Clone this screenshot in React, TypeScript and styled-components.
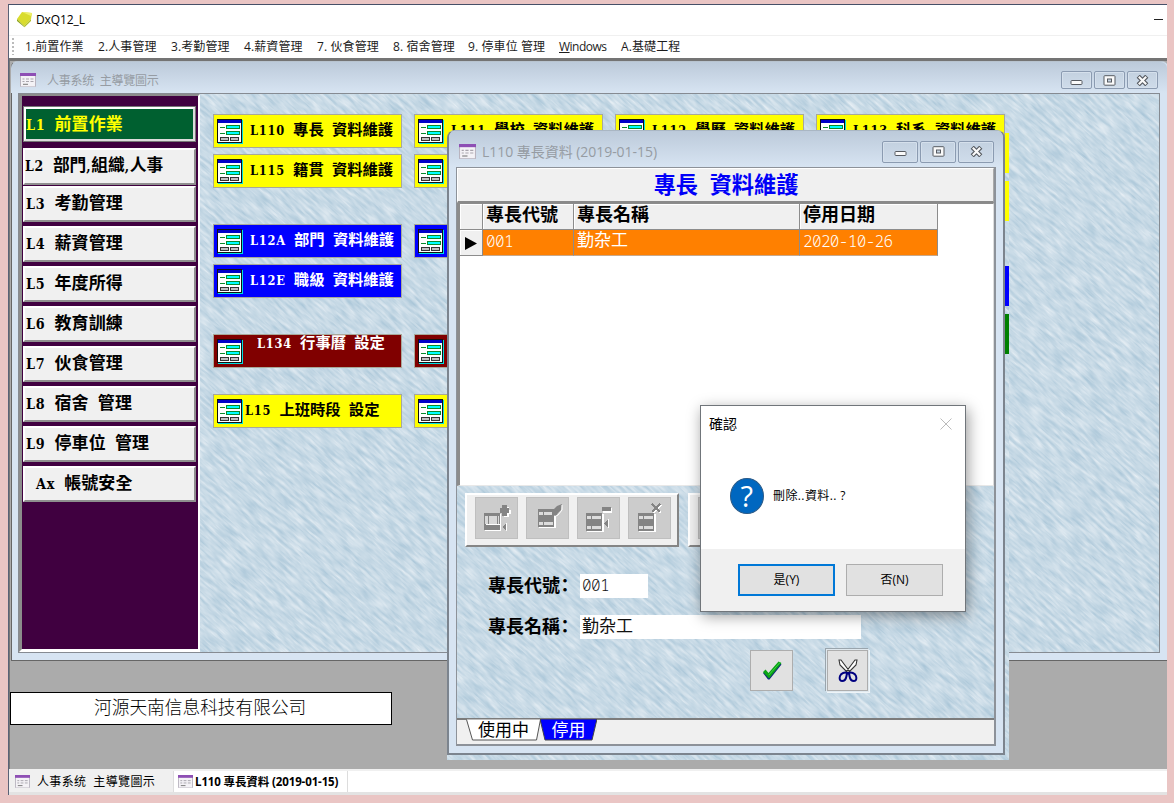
import React from "react";
import styled, { createGlobalStyle } from "styled-components";

const UI = `"Open Sans", "Noto Sans", "Noto Sans CJK TC", sans-serif`;
const CJK = `"Noto Sans CJK TC", "Noto Sans CJK SC", sans-serif`;

const GlobalStyle = createGlobalStyle`
  * { box-sizing: border-box; }
  body { margin: 0; background: #eac5c4; overflow: hidden; }
  button { font: inherit; color: inherit; margin: 0; padding: 0; border-radius: 0; }
`;

/* ---------- text with half-width serif Latin beside full-width CJK ---------- */

const MingBox = styled.span<{ $size: number; $gap: number; $bold: boolean }>`
  font-family: ${CJK};
  font-size: ${(p) => p.$size}px;
  letter-spacing: ${(p) => p.$gap}px;
  font-weight: ${(p) => (p.$bold ? 700 : 400)};
  white-space: pre;
  line-height: 1;
`;

const Latin = styled.span<{ $half: number }>`
  font-family: "DejaVu Serif Condensed", "DejaVu Serif", serif;
  font-size: ${(p) => p.$half * 1.66}px;
  letter-spacing: 0.75px;
  word-spacing: ${(p) => p.$half * 0.46}px;
`;

interface MingProps {
  text: string;
  size?: number;
  gap?: number;
  bold?: boolean;
}

const Ming = ({ text, size = 15.3, gap = 0, bold = true }: MingProps) => (
  <MingBox $size={size} $gap={gap} $bold={bold}>
    {text.split(/([\x20-\x7e]+)/).map((run, i) =>
      i % 2 ? (
        <Latin key={i} $half={(size + gap) / 2}>
          {run}
        </Latin>
      ) : (
        run
      ),
    )}
  </MingBox>
);

/* ---------- brushed paper background ---------- */

const TextureSvg = styled.svg`
  position: absolute;
  inset: 0;
  width: 100%;
  height: 100%;
  z-index: -1;
`;

const Texture = ({ id }: { id: string }) => (
  <TextureSvg aria-hidden="true">
    <filter id={id} x="0" y="0" width="100%" height="100%" colorInterpolationFilters="sRGB">
      <feTurbulence type="fractalNoise" baseFrequency="0.05 0.34" numOctaves={3} seed={4} />
      <feColorMatrix values="0.3 0 0 0 0.63  0.2 0 0 0 0.752  0.14 0 0 0 0.83  0 0 0 0 1" />
    </filter>
    <rect width="100%" height="100%" fill="#c9dce8" />
    <g transform="rotate(42)">
      <rect x="-200" y="-900" width="1800" height="1800" filter={`url(#${id})`} />
    </g>
  </TextureSvg>
);

/* ---------- icons ---------- */

const FormIcon = () => (
  <svg width="27" height="25" viewBox="0 0 27 25" shapeRendering="crispEdges">
    <rect x="1" y="1" width="25" height="24" fill="#00e0e0" />
    <rect width="25" height="24" fill="#111" />
    <rect x="1" y="4" width="23" height="19" fill="#fff" />
    <rect x="1" y="1" width="23" height="3" fill="#0000c8" />
    <path d="M3 8.5h5M3 14.5h5" stroke="#0a8a2a" />
    <rect x="9.5" y="6.5" width="13" height="3" fill="#00ffff" stroke="#0a8a2a" />
    <rect x="9.5" y="12.5" width="13" height="3" fill="#00ffff" stroke="#0a8a2a" />
    <rect x="3.5" y="18.5" width="8" height="3" fill="#c0c0c0" stroke="#333" />
    <rect x="13.5" y="18.5" width="8" height="3" fill="#c0c0c0" stroke="#333" />
  </svg>
);

const WindowIcon = ({ w = 16 }: { w?: number }) => (
  <svg width={w} height={w * 0.9} viewBox="0 0 16 14.4">
    <rect x="0.5" y="0.5" width="15" height="13.4" rx="0.6" fill="#f4f2f6" stroke="#b9b4bf" />
    <rect width="16" height="3" fill="#8e4fb4" />
    <path d="M2.5 6h2M2.5 8.5h2M6 6h3M6 8.5h3M10.5 6h3M10.5 8.5h3" stroke="#a9a5ad" />
    <path d="M3 11.3h5" stroke="#777" />
  </svg>
);

const AppIcon = () => (
  <svg width="17" height="17" viewBox="0 0 17 17">
    <path d="M1 8 6 1l10 1-1 6-7 7z" fill="#d9dc2e" />
    <path d="M1 8l7 7 0.5 1.2L1 10z" fill="#8fa51c" />
    <path d="M8 15l7-7v2l-6.5 6.2z" fill="#b2bf25" />
    <path d="M6 1l10 1-1 3z" fill="#eef06a" />
  </svg>
);

const MinGlyph = () => (
  <svg width="13" height="11" viewBox="0 0 13 11">
    <rect x="1" y="5.5" width="11" height="4" rx="0.8" fill="#fafafa" stroke="#565a60" />
  </svg>
);

const MaxGlyph = () => (
  <svg width="13" height="11" viewBox="0 0 13 11">
    <rect x="1" y="0.7" width="11" height="9.5" rx="0.8" fill="#fafafa" stroke="#565a60" />
    <rect x="4.5" y="4" width="4" height="3" fill="#c7d5e3" stroke="#565a60" />
  </svg>
);

const CloseGlyph = () => (
  <svg width="13" height="11" viewBox="0 0 13 11">
    <path d="M2.2 1.2l8.6 8.6M10.8 1.2l-8.6 8.6" stroke="#565a60" strokeWidth="4.4" />
    <path d="M2.8 1.8l7.4 7.4M10.2 1.8l-7.4 7.4" stroke="#fafafa" strokeWidth="2.2" />
  </svg>
);

type ToolKind = "add" | "edit" | "remove" | "cancel";

const Table = ({ y, h }: { y: number; h: number }) => (
  <>
    <rect x="10" y={y + 1} width="17" height={h} fill="#fff" />
    <rect x="9" y={y} width="16" height={h} fill="#848484" />
    <path d={`M10 ${y + 4.5}h14M10 ${y + h - 3.5}h14`} stroke="#dcdcdc" strokeWidth="3" />
    <path d={`M14.5 ${y + 3}v3M14.5 ${y + h - 5}v3`} stroke="#848484" />
  </>
);

const ToolIcon = ({ kind }: { kind: ToolKind }) => (
  <svg width="43" height="41" viewBox="0 0 43 41" shapeRendering={kind === "edit" ? "auto" : "crispEdges"}>
    {kind === "add" && (
      <>
        <rect x="10" y="16" width="16" height="17" fill="#fff" />
        <rect x="9" y="15" width="16" height="17" fill="#848484" />
        <path d="M10 18h14v8H10z" fill="#d8d8d8" />
        <path d="M13.5 18v8M22.5 18v8" stroke="#848484" />
        <path d="M11 26.5h14" stroke="#fff" />
        <path d="M29 9h5v3h2v4h-2v3h-5v-3h-2v-4h2z" fill="#fff" />
        <path d="M27 7h5v3h2v5h-2v3h-5v-3h-2v-5h2z" fill="#848484" />
        <path d="M31 25v8l-4-4z" fill="#848484" />
        <path d="M31.5 25v8" stroke="#fff" />
      </>
    )}
    {kind === "edit" && (
      <>
        <g transform="translate(3 -4)">
          <Table y={15} h={18} />
        </g>
        <path d="M26 13l5-5 5-2-1 6-3 3-2 3-4-1z" fill="#848484" />
        <path d="M28 19l4-2 4-5V7" stroke="#fff" fill="none" />
      </>
    )}
    {kind === "remove" && (
      <>
        <Table y={15} h={18} />
        <rect x="26" y="10" width="9" height="5" fill="#fff" />
        <rect x="25" y="9" width="9" height="4" fill="#848484" />
        <path d="M31 21v9l-4-4z" fill="#848484" />
        <path d="M31.5 21v9" stroke="#fff" />
      </>
    )}
    {kind === "cancel" && (
      <>
        <g transform="translate(1 0)">
          <Table y={15} h={18} />
        </g>
        <path d="M25 7l8 8M33 7l-8 8" stroke="#fff" strokeWidth="1.5" />
        <path d="M24 6l8 8M32 6l-8 8" stroke="#848484" strokeWidth="1.5" />
      </>
    )}
  </svg>
);

const CheckIcon = () => (
  <svg width="20" height="20" viewBox="0 0 20 20">
    <path d="M1 12l2.5-2.5 3 4L17.5 2l2 1.500L7.500 18.500H6z" fill="#102a7a" />
    <path d="M1 11l2.5-2.5L6.500 12 16.500 0.500 19.500 2 7 17.500z" fill="#0aa514" />
    <path d="M6.800 14L18 1.500" stroke="#3fd24a" />
  </svg>
);

const ScissorsIcon = () => (
  <svg width="22" height="23" viewBox="0 0 22 23" fill="none">
    <path d="M2 1l1 5 8 8 2-1-9-12zM20 1l-1 5-8 8-2-1L18 1z" fill="#fff" stroke="#333" strokeWidth="1.1" />
    <path d="M8 13h6l-3 3z" fill="#000080" />
    <path d="M10 14c-2-1-6 0-7 3-1 3 0 5 2 5s4-2 4.5-5zM12 14c2-1 6 0 7 3 1 3 0 5-2 5s-4-2-4.5-5z" stroke="#000080" strokeWidth="2" />
  </svg>
);

/* ---------- shell ---------- */

const Shell = styled.div`
  width: 1159px;
  height: 791px;
  margin: 4px 0 0 8px;
  display: flex;
  flex-direction: column;
  border-left: 1px solid #5a6276;
  border-top: 1px solid #465068;
  background: #fff;
`;

const TitleBar = styled.header`
  height: 31px;
  flex: none;
  display: flex;
  align-items: center;
  padding: 0 4px 1px 7px;
  gap: 3px;
  font: 12px/16px ${UI};
  letter-spacing: -0.1px;
  border-bottom: 1px solid #f0f0f0;
`;

const Minimise = styled.i`
  width: 9px;
  height: 1px;
  margin-left: auto;
  background: #222;
`;

const MenuBar = styled.nav`
  height: 22px;
  flex: none;
  display: flex;
  align-items: center;
  padding: 0 0 1px 3px;
  font: 12px/16px ${UI};
  color: #1c1c1c;
`;

const Grip = styled.i`
  height: 17px;
  width: 2px;
  margin-right: 11px;
  background: repeating-linear-gradient(#bbb 0 2px, transparent 2px 4px);
`;

const MenuItem = styled.span<{ $w: number; $ls?: number }>`
  width: ${(p) => p.$w}px;
  white-space: nowrap;
  letter-spacing: ${(p) => p.$ls ?? 0.1}px;
`;

const Desktop = styled.main`
  position: relative;
  flex: 1;
  background: #ababab;
  border-top: 3px solid #747474;
  box-shadow: inset 1px 0 #777;
  overflow: hidden;
`;

const MdiFrame = styled.section`
  position: absolute;
  display: flex;
  flex-direction: column;
  border: 1px solid #666;
  background: #d7e4f2;
`;

const MainFrame = styled(MdiFrame)`
  left: 2px;
  top: 0;
  width: 1157px;
  height: 600px;
  border-right: 0;
  border-top-color: #b8c4d0;
  border-radius: 6px 6px 0 0;
  padding: 0 8px 7px 6px;
`;

const FrameTitle = styled.header<{ $h: number; $size: number; $pad: number; $end: number }>`
  height: ${(p) => p.$h}px;
  flex: none;
  display: flex;
  align-items: center;
  margin: 0 -7px 0 -7px;
  padding: 5px ${(p) => p.$end}px 0 ${(p) => p.$pad}px;
  background: linear-gradient(#bccada, #d7e4f2);
  border-radius: 6px 6px 0 0;
  font: ${(p) => p.$size}px/18px ${UI};
  color: #969ca3;
  white-space: pre;
`;

const FrameText = styled.span<{ $gap: number; $ls?: number }>`
  margin: 1px auto 0 ${(p) => p.$gap}px;
  letter-spacing: ${(p) => p.$ls ?? 0}px;
`;

const FrameButton = styled.button<{ $w: number; $h: number }>`
  width: ${(p) => p.$w}px;
  height: ${(p) => p.$h}px;
  margin-left: 2px;
  display: grid;
  place-items: center;
  background: linear-gradient(#c3d1e0, #cfdcea);
  border: 1px solid #8b9bb1;
  border-radius: 2px;
  box-shadow: inset 0 0 0 1px #d5e0ec;
`;

const FrameButtons = ({ w, h }: { w: number; h: number }) => (
  <>
    <FrameButton $w={w} $h={h}><MinGlyph /></FrameButton>
    <FrameButton $w={w} $h={h}><MaxGlyph /></FrameButton>
    <FrameButton $w={w} $h={h}><CloseGlyph /></FrameButton>
  </>
);

const MainBody = styled.div`
  position: relative;
  isolation: isolate;
  flex: 1;
  display: flex;
  border: 1px solid #868b92;
  overflow: hidden;
`;

/* ---------- sidebar ---------- */

const Sidebar = styled.nav`
  width: 181px;
  flex: none;
  display: flex;
  flex-direction: column;
  padding: 10px 3px 0 1px;
  background: #400040;
  border: solid;
  border-width: 2px 2px 3px 3px;
  border-color: #8c8c8c #fff #fff #8c8c8c;
`;

const SideButton = styled.button<{ $h: number; $mt: number; $pad: number; $active?: boolean }>`
  width: 173px;
  height: ${(p) => p.$h}px;
  margin-top: ${(p) => p.$mt}px;
  padding: 0 0 ${(p) => (p.$active ? 1 : 4)}px ${(p) => p.$pad}px;
  display: flex;
  align-items: center;
  color: ${(p) => (p.$active ? "#ff0" : "#000")};
  background: ${(p) => (p.$active ? "#006030" : "#f0f0f0")};
  border: solid;
  border-width: ${(p) => (p.$active ? "3px" : "2px")};
  border-color: ${(p) => (p.$active ? "#fff #ddd #ddd #fff" : "#fff #8f8f8f #8f8f8f #fff")};
  outline: ${(p) => (p.$active ? "1px solid #777" : "none")};
  outline-offset: -1px;
`;

interface SideItem {
  text: string;
  mt: number;
  pad?: number;
  size?: number;
}

const sideItems: SideItem[] = [
  { text: "L1 前置作業", mt: 0, pad: 0 },
  { text: "L2 部門,組織,人事", mt: 6, size: 16.7, pad: 0 },
  { text: "L3 考勤管理", mt: 1 },
  { text: "L4 薪資管理", mt: 4 },
  { text: "L5 年度所得", mt: 4 },
  { text: "L6 教育訓練", mt: 4 },
  { text: "L7 伙食管理", mt: 4 },
  { text: "L8 宿舍 管理", mt: 4 },
  { text: "L9 停車位 管理", mt: 4 },
  { text: "Ax 帳號安全", mt: 4, pad: 11 },
];

/* ---------- navigation map ---------- */

const NavMap = styled.div`
  display: flex;
  flex-direction: column;
  padding: 20px 0 0 13px;
`;

const NavRow = styled.div<{ $mt: number }>`
  display: flex;
  gap: 12px;
  margin-top: ${(p) => p.$mt}px;
`;

const tones = { yellow: ["#ffff00", "#000"], blue: ["#0000ff", "#fff"], maroon: ["#800000", "#fff"] };
type Tone = keyof typeof tones;

const NavButton = styled.button<{ $tone: Tone; $pad: number; $up?: boolean }>`
  width: 189px;
  height: 34px;
  display: flex;
  align-items: center;
  padding-left: 3px;
  color: ${(p) => tones[p.$tone][1]};
  background: ${(p) => tones[p.$tone][0]};
  border: 1px solid #a8a89a;

  svg { flex: none; }
  > span { flex: none; margin: 0 0 ${(p) => (p.$up ? 17 : 3)}px ${(p) => p.$pad}px; }
`;

interface NavItem {
  text: string;
  pad?: number;
  up?: boolean;
}

const navRows: { tone: Tone; mt: number; items: NavItem[] }[] = [
  {
    tone: "yellow",
    mt: 0,
    items: [
      { text: "L110 專長 資料維護" },
      { text: "L111 學校 資料維護" },
      { text: "L112 學歷 資料維護" },
      { text: "L113 科系 資料維護" },
    ],
  },
  { tone: "yellow", mt: 6, items: [{ text: "L115 籍貫 資料維護" }, { text: "" }] },
  { tone: "blue", mt: 36, items: [{ text: "L12A 部門 資料維護" }, { text: "" }] },
  { tone: "blue", mt: 6, items: [{ text: "L12E 職級 資料維護" }] },
  { tone: "maroon", mt: 36, items: [{ text: "L134 行事曆 設定", pad: 13, up: true }, { text: "" }] },
  { tone: "yellow", mt: 26, items: [{ text: "L15 上班時段 設定", pad: 1 }, { text: "" }] },
];

/* ---------- record window ---------- */

const RecordPatch = styled.div`
  position: absolute;
  isolation: isolate;
  left: 438px;
  top: 69px;
  width: 562px;
  height: 630px;

  > svg { top: 10px; height: 620px; }
`;

const EdgeStrips = styled.div`
  position: absolute;
  right: 0;
  top: 3px;
  width: 4px;
  display: flex;
  flex-direction: column;
`;

const EdgeStrip = styled.i<{ $c: string; $mt: number }>`
  height: 40px;
  margin-top: ${(p) => p.$mt}px;
  background: ${(p) => p.$c};
`;

const RecordFrame = styled(MdiFrame)`
  inset: 0 4px 5px 0;
  border-radius: 8px 8px 0 0;
  border-width: 1px 2px 2px;
  border-color: #a9b6c3 #7c848e #7c848e;
  padding: 0 7px 7px 7px;
`;

const RecordBody = styled.div`
  flex: 1;
  display: flex;
  flex-direction: column;
  border: 2px solid #8d9299;
  border-width: 1px 2px 2px 1px;
`;

const Heading = styled.h1`
  height: 35px;
  flex: none;
  margin: 0;
  display: flex;
  align-items: center;
  justify-content: center;
  padding: 0 0 1px 1px;
  background: #f0f0f0;
  border: solid;
  border-width: 1px 1px 2px 1px;
  border-color: #fff #aaa #8a8a8a #fff;
  color: #0000f8;
`;

const Grid = styled.div`
  height: 283px;
  flex: none;
  background: #fff;
  border: solid;
  border-width: 1px 1px 1px 3px;
  border-color: #8c8c8c #ddd #e8e8e8 #8c8c8c;
`;

const GridRow = styled.div<{ $head?: boolean }>`
  display: grid;
  grid-template-columns: 23px 91px 226px 138px;
  width: 478px;
  height: 26px;
  color: ${(p) => (p.$head ? "#000" : "#fff")};
  background: ${(p) => (p.$head ? "#f0f0f0" : "#ff8000")};
  font: 17px/1 ${CJK};
`;

const Cell = styled.div<{ $plain?: boolean }>`
  padding: 0 0 0 3px;
  background: ${(p) => (p.$plain ? "#f0f0f0" : "transparent")};
  border-right: 1px solid #8c8c8c;
  border-bottom: 1px solid ${(p) => (p.$plain ? "#8c8c8c" : "#c9a88a")};
  box-shadow: inset 1px 1px ${(p) => (p.$plain ? "#fff" : "transparent")};
`;

const Digits = styled.span`
  font: 300 16px/22px "Noto Sans Mono", monospace;
  letter-spacing: -0.65px;
`;

const Form = styled.div`
  position: relative;
  isolation: isolate;
  flex: 1;
  display: flex;
  flex-direction: column;
  padding-left: 8px;
  overflow: hidden;
`;

const Toolbars = styled.div`
  display: flex;
  gap: 9px;
  margin-top: 7px;
`;

const Toolbar = styled.div`
  flex: none;
  height: 54px;
  display: flex;
  gap: 8px;
  padding: 3px 6px 0 8px;
  background: #f0f0f0;
  border: 2px solid;
  border-color: #fff #858585 #858585 #fff;
`;

const ToolButton = styled.button`
  width: 43px;
  height: 42px;
  margin-top: -1px;
  display: grid;
  place-items: center;
  background: #ccc;
  border: 1px solid #bfbfbf;

  svg { flex: none; margin: -1px; }
`;

const Field = styled.label<{ $mt: number }>`
  display: flex;
  align-items: center;
  height: 24px;
  margin-top: ${(p) => p.$mt}px;
  padding-left: 23px;
`;

const FieldName = styled.span`
  width: 92px;
  padding-bottom: 2px;
`;

const Colon = styled.span`
  margin-left: -4px;
`;

const FieldValue = styled.span<{ $w: number }>`
  width: ${(p) => p.$w}px;
  height: 24px;
  padding-left: 2px;
  background: #fff;
  color: #111;
  font: 17px/20px ${CJK};
`;

const Actions = styled.div`
  display: flex;
  gap: 34px;
  margin: 11px 0 0 285px;
`;

const ActionButton = styled.button<{ $inset?: boolean }>`
  width: ${(p) => (p.$inset ? 41 : 43)}px;
  height: 41px;
  display: grid;
  place-items: center;
  background: #e1e1e1;
  border: 1px solid #adadad;
  outline: ${(p) => (p.$inset ? "1px solid #dfe8ee" : "none")};
  box-shadow: ${(p) => (p.$inset ? "-1px -1px 0 1px #9aa5ad, 1px 1px 0 1px #eef4f8" : "none")};
`;

const TabStrip = styled.div`
  height: 26px;
  flex: none;
  background: #f0f0f0;
  border-top: 2px solid #7c7c7c;
  padding-left: 9px;
  display: flex;
`;

const Tab = styled.div<{ $active?: boolean; $w: number }>`
  position: relative;
  isolation: isolate;
  width: ${(p) => p.$w}px;
  height: 21px;
  margin: -1px -1px 0 0;
  text-align: center;
  font: 17px/20px ${CJK};
  color: ${(p) => (p.$active ? "#fff" : "#000")};

  svg { position: absolute; inset: 0; z-index: -1; }
`;

/* ---------- confirmation dialog ---------- */

const Dialog = styled.div`
  position: absolute;
  left: 691px;
  top: 344px;
  width: 266px;
  height: 207px;
  display: flex;
  flex-direction: column;
  background: #fff;
  border: 1px solid #70757a;
  box-shadow: 2px 4px 14px rgba(0, 0, 0, 0.4);
  font: 12px/16px ${UI};
`;

const DialogTitle = styled.header`
  display: flex;
  justify-content: space-between;
  align-items: center;
  height: 36px;
  padding: 0 13px 0 8px;
  font-size: 14px;
`;

const DialogMessage = styled.div`
  flex: 1;
  display: flex;
  gap: 9px;
  align-items: center;
  padding: 0 0 0 29px;
  letter-spacing: 0.4px;
`;

const Question = styled.span`
  width: 34px;
  height: 36px;
  border-radius: 50%;
  background: #0067c0;
  border: 1px solid #2a5a88;
  color: #fff;
  text-align: center;
  font: 29px/33px ${UI};
`;

const DialogFooter = styled.footer`
  height: 62px;
  display: flex;
  gap: 11px;
  padding: 15px 0 0 37px;
  background: #f0f0f0;
`;

const DialogButton = styled.button<{ $primary?: boolean }>`
  width: 97px;
  height: 32px;
  background: #e1e1e1;
  border: ${(p) => (p.$primary ? "2px solid #0078d7" : "1px solid #adadad")};
`;

/* ---------- bottom ---------- */

const CompanyBox = styled.div`
  position: absolute;
  left: 1px;
  top: 631px;
  width: 382px;
  height: 33px;
  padding-left: 83px;
  background: #fff;
  border: 1px solid #000;
  font: 300 17.7px/27px "Noto Sans CJK SC", sans-serif;
`;

const TaskBar = styled.footer`
  height: 26px;
  flex: none;
  display: flex;
  background: #fff;
  border-top: 2px solid #f0f0f0;
  border-bottom: 3px solid #e3e3e3;
  font: 12px/20px ${UI};
`;

const TaskTab = styled.div<{ $w: number; $active?: boolean; $ls: number }>`
  width: ${(p) => p.$w}px;
  display: flex;
  align-items: center;
  gap: ${(p) => (p.$active ? 2 : 7)}px;
  padding-left: ${(p) => (p.$active ? 4 : 6)}px;
  background: ${(p) => (p.$active ? "#fff" : "#f0f0f0")};
  border-right: 1px solid #ddd;
  font-weight: ${(p) => (p.$active ? 700 : 400)};
  font-size: ${(p) => (p.$active ? 11.5 : 12)}px;
  letter-spacing: ${(p) => p.$ls}px;
  white-space: pre;
`;

export default function App() {
  return (
    <>
      <GlobalStyle />
      <Shell>
        <TitleBar>
          <AppIcon />
          <span>DxQ12_L</span>
          <Minimise />
        </TitleBar>
        <MenuBar>
          <Grip />
          <MenuItem $w={73}>1.前置作業</MenuItem>
          <MenuItem $w={73}>2.人事管理</MenuItem>
          <MenuItem $w={73}>3.考勤管理</MenuItem>
          <MenuItem $w={73}>4.薪資管理</MenuItem>
          <MenuItem $w={76}>7. 伙食管理</MenuItem>
          <MenuItem $w={75}>8. 宿舍管理</MenuItem>
          <MenuItem $w={91}>9. 停車位 管理</MenuItem>
          <MenuItem $w={62} $ls={-0.5}><u>W</u>indows</MenuItem>
          <MenuItem $w={62}>A.基礎工程</MenuItem>
        </MenuBar>
        <Desktop>
          <MainFrame>
            <FrameTitle $h={31} $size={12} $pad={9} $end={9}>
              <WindowIcon />
              <FrameText $gap={11} $ls={-0.25}>人事系统  主導覽圖示</FrameText>
              <FrameButtons w={31} h={18} />
            </FrameTitle>
            <MainBody>
              <Texture id="paperMain" />
              <Sidebar>
                {sideItems.map((it, i) => (
                  <SideButton key={it.text} $h={i === 1 ? 37 : 36} $mt={it.mt} $pad={it.pad ?? 1} $active={i === 0}>
                    <Ming text={it.text} size={it.size ?? 17} gap={it.size ? 0 : 0.1} />
                  </SideButton>
                ))}
              </Sidebar>
              <NavMap>
                {navRows.map((row, r) => (
                  <NavRow key={r} $mt={row.mt}>
                    {row.items.map((it, i) => (
                      <NavButton key={i} $tone={row.tone} $pad={it.pad ?? 6} $up={it.up}>
                        <FormIcon />
                        {it.text && <Ming text={it.text} />}
                      </NavButton>
                    ))}
                  </NavRow>
                ))}
              </NavMap>
            </MainBody>
          </MainFrame>

          <RecordPatch>
            <Texture id="paperPatch" />
            <EdgeStrips>
              <EdgeStrip $c="#ffff00" $mt={0} />
              <EdgeStrip $c="#ffff00" $mt={8} />
              <EdgeStrip $c="#0000ff" $mt={45} />
              <EdgeStrip $c="#008000" $mt={8} />
            </EdgeStrips>
            <RecordFrame>
              <FrameTitle $h={36} $size={14} $pad={10} $end={9}>
                <WindowIcon w={17} />
                <FrameText $gap={6} $ls={-0.04}>L110 專長資料 (2019-01-15)</FrameText>
                <FrameButtons w={36} h={22} />
              </FrameTitle>
              <RecordBody>
                <Heading>
                  <Ming text="專長 資料維護" size={22.2} />
                </Heading>
                <Grid>
                  <GridRow $head>
                    <Cell $plain />
                    <Cell $plain><Ming text="專長代號" size={18} /></Cell>
                    <Cell $plain><Ming text="專長名稱" size={18} /></Cell>
                    <Cell $plain><Ming text="停用日期" size={18} /></Cell>
                  </GridRow>
                  <GridRow>
                    <Cell $plain>
                      <svg width="16" height="22" viewBox="0 0 16 22">
                        <path d="M2 7l12 6.5L2 20z" fill="#000" />
                      </svg>
                    </Cell>
                    <Cell><Digits>001</Digits></Cell>
                    <Cell>勤杂工</Cell>
                    <Cell><Digits>2020-10-26</Digits></Cell>
                  </GridRow>
                </Grid>
                <Form>
                  <Texture id="paperForm" />
                  <Toolbars>
                    <Toolbar>
                      {(["add", "edit", "remove", "cancel"] as ToolKind[]).map((k) => (
                        <ToolButton key={k}><ToolIcon kind={k} /></ToolButton>
                      ))}
                    </Toolbar>
                    <Toolbar>
                      <ToolButton />
                    </Toolbar>
                  </Toolbars>
                  <Field $mt={27}>
                    <FieldName><Ming text="專長代號" size={18} /><Colon><Ming text="：" size={18} /></Colon></FieldName>
                    <FieldValue $w={68}><Digits>001</Digits></FieldValue>
                  </Field>
                  <Field $mt={17}>
                    <FieldName><Ming text="專長名稱" size={18} /><Colon><Ming text="：" size={18} /></Colon></FieldName>
                    <FieldValue $w={281}>勤杂工</FieldValue>
                  </Field>
                  <Actions>
                    <ActionButton><CheckIcon /></ActionButton>
                    <ActionButton $inset><ScissorsIcon /></ActionButton>
                  </Actions>
                </Form>
                <TabStrip>
                  <Tab $w={75}>
                    <svg width="75" height="22"><path d="M0.5 0.5l6 20.5h64l4-20.5" fill="#fff" stroke="#555" /></svg>
                    使用中
                  </Tab>
                  <Tab $w={57} $active>
                    <svg width="57" height="22"><path d="M0 0l5 21h47l5-21z" fill="#0000ff" stroke="#444" /></svg>
                    停用
                  </Tab>
                </TabStrip>
              </RecordBody>
            </RecordFrame>
          </RecordPatch>

          <Dialog>
            <DialogTitle>
              確認
              <svg width="12" height="12" viewBox="0 0 12 12"><path d="M0.5 0.5l11 11M11.5 0.5l-11 11" stroke="#bbb" /></svg>
            </DialogTitle>
            <DialogMessage>
              <Question>?</Question>
              刪除..資料.. ?
            </DialogMessage>
            <DialogFooter>
              <DialogButton $primary>是(Y)</DialogButton>
              <DialogButton>否(N)</DialogButton>
            </DialogFooter>
          </Dialog>

          <CompanyBox>河源天南信息科技有限公司</CompanyBox>
        </Desktop>
        <TaskBar>
          <TaskTab $w={165} $ls={0.35}><WindowIcon w={15} />人事系统  主導覽圖示</TaskTab>
          <TaskTab $w={174} $active $ls={-0.12}><WindowIcon w={15} />L110 專長資料 (2019-01-15)</TaskTab>
        </TaskBar>
      </Shell>
    </>
  );
}
